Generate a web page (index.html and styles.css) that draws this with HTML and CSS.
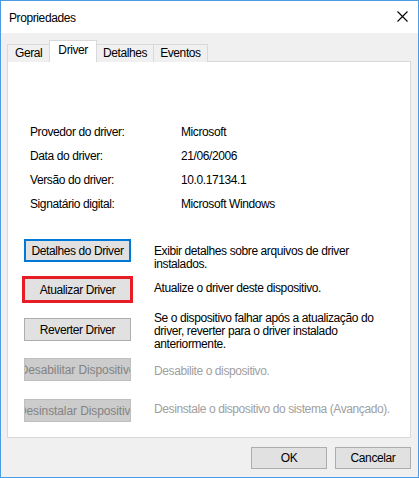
FILE: index.html
```html
<!DOCTYPE html>
<html lang="pt">
<head>
	<meta charset="UTF-8">
	<title>Propriedades</title>
	<link rel="stylesheet" href="styles.css">
</head>
<body>
	<div class="window">
		<div class="titlebar">
			<span class="title">Propriedades</span>
			<svg class="close" width="11" height="11" viewBox="0 0 11 11">
				<path d="M0.5 0.5 L10.5 10.5 M10.5 0.5 L0.5 10.5" stroke="#000" stroke-width="1.1" fill="none"/>
			</svg>
		</div>
		<div class="client">
			<div class="tabs">
				<span class="tab">Geral</span>
				<span class="tab on">Driver</span>
				<span class="tab">Detalhes</span>
				<span class="tab">Eventos</span>
			</div>
			<div class="panel">
				<div class="info">
					<span>Provedor do driver:</span><span>Microsoft</span>
					<span>Data do driver:</span><span>21/06/2006</span>
					<span>Versão do driver:</span><span>10.0.17134.1</span>
					<span>Signatário digital:</span><span>Microsoft Windows</span>
				</div>
				<div class="actions">
					<div class="action row1">
						<span class="btn default">Detalhes do Driver</span>
						<p class="desc">Exibir detalhes sobre arquivos de driver instalados.</p>
					</div>
					<div class="action row2">
						<span class="btn marked">Atualizar Driver</span>
						<p class="desc">Atualize o driver deste dispositivo.</p>
					</div>
					<div class="action row3">
						<span class="btn">Reverter Driver</span>
						<p class="desc">Se o dispositivo falhar após a atualização do driver, reverter para o driver instalado anteriormente.</p>
					</div>
					<div class="action row4">
						<span class="btn off">Desabilitar Dispositivo</span>
						<p class="desc off">Desabilite o dispositivo.</p>
					</div>
					<div class="action row5">
						<span class="btn off">Desinstalar Dispositivo</span>
						<p class="desc off">Desinstale o dispositivo do sistema (Avançado).</p>
					</div>
				</div>
			</div>
			<div class="footer">
				<span class="btn wide">OK</span>
				<span class="btn wide">Cancelar</span>
			</div>
		</div>
	</div>
</body>
</html>
```

FILE: styles.css
```css
* { margin: 0; padding: 0; box-sizing: border-box; }
body { font-family: "Liberation Sans", Arial, sans-serif; font-size: 12px; letter-spacing: -0.4px; color: #000; background: #fff; }
.window { width: 419px; height: 478px; border: 1px solid #4d9be2; background: #f0f0f0; display: flex; flex-direction: column; }
.titlebar { height: 32px; background: #fff; display: flex; align-items: center; justify-content: space-between; padding: 0 10px 0 8px; }
.title { padding-top: 1px; }
.close { margin-top: -1px; }
.client { padding: 7px 7px 8px 6px; }

.tabs { display: flex; align-items: flex-end; height: 22px; margin-bottom: -1px; position: relative; z-index: 1; }
.tab { height: 18px; line-height: 16px; padding: 0 6px; border: 1px solid #d9d9d9; border-bottom: none; background: #f0f0f0; margin-left: -1px; }
.tab:first-child { margin-left: 0; padding: 0 7px; }
.tab.on { height: 22px; line-height: 19px; background: #fff; padding: 0 8px; position: relative; z-index: 2; }

.panel { height: 377px; background: #fff; border: 1px solid #d9d9d9; padding: 0 0 0 16px; }
.info { display: grid; grid-template-columns: 151px auto; grid-auto-rows: 24px; align-items: center; margin: 58px 0 0 6px; }

.actions { margin-top: 23px; }
.action { display: flex; align-items: flex-start; gap: 23px; }
.desc { width: 242px; line-height: 13px; }
.desc.off { color: #a0a0a0; }

.btn { display: flex; align-items: center; justify-content: center; width: 107px; height: 23px; background: #e1e1e1; border: 1px solid #adadad; white-space: nowrap; overflow: hidden; flex-shrink: 0; }
.btn.default { border-color: #0078d7; box-shadow: inset 0 0 0 1px #0078d7; }
.btn.marked { outline: 3px solid #e81c24; outline-offset: -1px; }
.btn.off { background: #cccccc; border-color: #bfbfbf; color: #838383; letter-spacing: -0.1px; }

.row1 .desc { margin-top: 6px; }
.row2 { margin-top: 7px; }
.row2 .desc { margin-top: 4px; }
.row3 { margin-top: 11px; }
.row3 .btn { margin-top: 6px; }
.row4 { margin-top: 7px; }
.row4 .desc { margin-top: 7px; }
.row5 { margin-top: 18px; }
.row5 .desc { margin-top: 4px; }

.footer { display: flex; justify-content: flex-end; gap: 8px; margin-top: 9px; }
.btn.wide { width: 76px; height: 22px; }
```
